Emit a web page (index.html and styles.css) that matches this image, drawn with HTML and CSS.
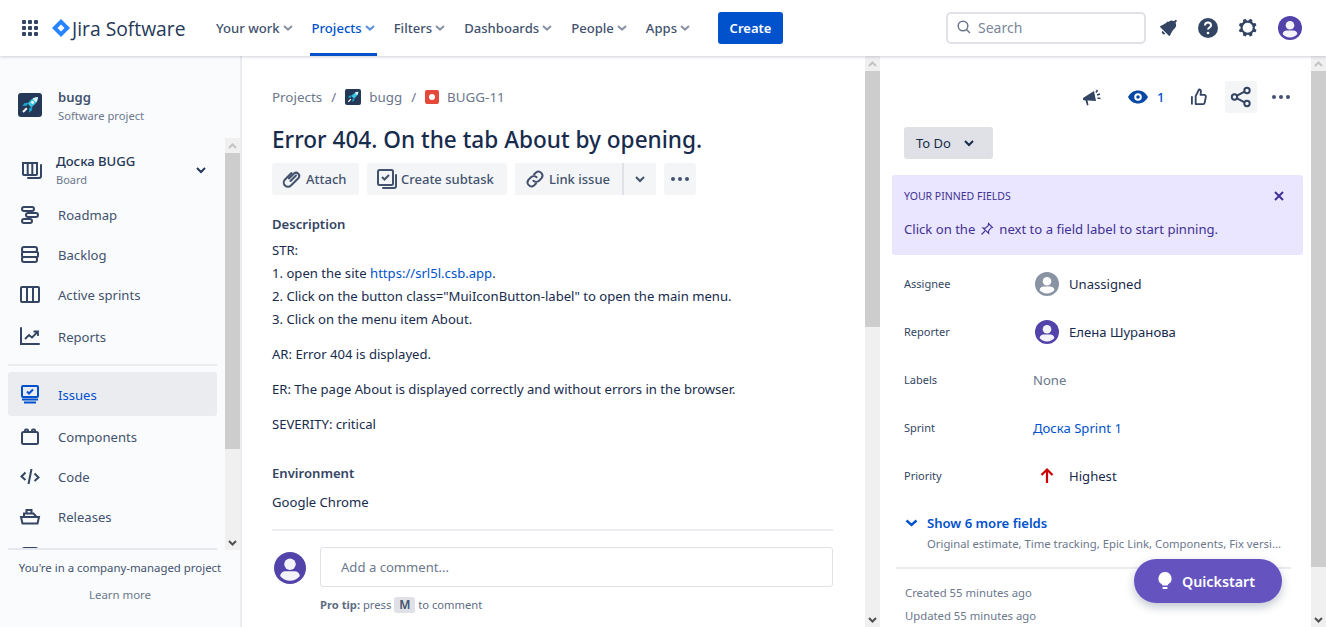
FILE: index.html
```html
<!DOCTYPE html>
<html>
<head>
  <title>BUGG-11 - Jira</title>
  <link rel="stylesheet" href="styles.css">
</head>
<body>
  <header class="topbar">
    <svg class="apps" width="16" height="16" viewBox="0 0 16 16" fill="#344563"><rect width="4" height="4" rx="1"/><rect x="6" width="4" height="4" rx="1"/><rect x="12" width="4" height="4" rx="1"/><rect y="6" width="4" height="4" rx="1"/><rect x="6" y="6" width="4" height="4" rx="1"/><rect x="12" y="6" width="4" height="4" rx="1"/><rect y="12" width="4" height="4" rx="1"/><rect x="6" y="12" width="4" height="4" rx="1"/><rect x="12" y="12" width="4" height="4" rx="1"/></svg>
    <svg class="logo" width="18" height="18" viewBox="0 0 18 18"><path d="M9 0l9 9-9 9-9-9z" fill="#2684ff"/><path d="M9 5.500L12.500 9 9 12.500 5.500 9z" fill="#fff"/></svg>
    <span class="brand">Jira Software</span>
    <nav class="mainnav">
      <a class="navlink">Your work <svg width="10" height="6" viewBox="0 0 10 6"><path d="M1 1l4 3.600L9 1" fill="none" stroke="#8993a4" stroke-width="2"/></svg></a>
      <a class="navlink active">Projects <svg width="10" height="6" viewBox="0 0 10 6"><path d="M1 1l4 3.600L9 1" fill="none" stroke="#5c8fdc" stroke-width="2"/></svg></a>
      <a class="navlink">Filters <svg width="10" height="6" viewBox="0 0 10 6"><path d="M1 1l4 3.600L9 1" fill="none" stroke="#8993a4" stroke-width="2"/></svg></a>
      <a class="navlink">Dashboards <svg width="10" height="6" viewBox="0 0 10 6"><path d="M1 1l4 3.600L9 1" fill="none" stroke="#8993a4" stroke-width="2"/></svg></a>
      <a class="navlink">People <svg width="10" height="6" viewBox="0 0 10 6"><path d="M1 1l4 3.600L9 1" fill="none" stroke="#8993a4" stroke-width="2"/></svg></a>
      <a class="navlink">Apps <svg width="10" height="6" viewBox="0 0 10 6"><path d="M1 1l4 3.600L9 1" fill="none" stroke="#8993a4" stroke-width="2"/></svg></a>
    </nav>
    <button class="create">Create</button>
    <div class="search">
      <svg width="16" height="16" viewBox="0 0 16 16" fill="none" stroke="#6b778c" stroke-width="1.500"><circle cx="7" cy="7" r="4.800"/><path d="M10.500 10.500l3.500 3.500"/></svg>
      <span>Search</span>
    </div>
    <div class="topicons">
      <svg width="24" height="24" viewBox="0 0 24 24" fill="#344563"><path d="M6.500 17.700a2 2 0 002.800 0l-2.800-2.900a2 2 0 000 2.900zm4.900-12.200l-.7.7c-.8.8-2.200 1.800-3.200 2.300l-3 1.500c-.5.300-.6.800-.2 1.200l8.600 8.500c.4.400.9.300 1.100-.2l1.500-3c.5-1 1.600-2.400 2.300-3.200l.8-.7a5 5 0 00.9-5.800l1-1a1 1 0 000-1.500l-.1-.1a1 1 0 00-1.400 0l-1 1a5 5 0 00-5.800.9z"/></svg>
      <svg width="24" height="24" viewBox="0 0 24 24"><circle cx="12" cy="12" r="10" fill="#344563"/><path d="M9 9.600a3 3 0 116 0c0 1.900-3 2-3 4" fill="none" stroke="#fff" stroke-width="2"/><circle cx="12" cy="17" r="1.300" fill="#fff"/></svg>
      <svg width="24" height="24" viewBox="0 0 24 24" fill="#344563"><path fill-rule="evenodd" d="M11.701 16.700a5.002 5.002 0 110-10.003 5.002 5.002 0 010 10.004m8.368-3.117a1.995 1.995 0 01-1.346-1.885c0-.876.563-1.613 1.345-1.885a.48.48 0 00.315-.574 8.947 8.947 0 00-.836-1.993.477.477 0 00-.598-.195 2.04 2.04 0 01-1.29.08 1.988 1.988 0 01-1.404-1.395 2.04 2.04 0 01.076-1.297.478.478 0 00-.196-.597 8.98 8.98 0 00-1.975-.826.479.479 0 00-.574.314 1.995 1.995 0 01-1.885 1.346 1.994 1.994 0 01-1.884-1.345.482.482 0 00-.575-.315c-.708.2-1.379.485-2.004.842a.47.47 0 00-.198.582A2.002 2.002 0 014.445 7.060a.478.478 0 00-.595.196 8.946 8.946 0 00-.833 1.994.48.48 0 00.308.572 1.995 1.995 0 011.323 1.877c0 .867-.552 1.599-1.324 1.877a.479.479 0 00-.308.57 8.99 8.99 0 00.723 1.79.477.477 0 00.624.194c.595-.273 1.343-.264 2.104.238.117.077.225.185.302.3.527.8.512 1.58.198 2.188a.473.473 0 00.168.628 8.946 8.946 0 002.11.897.474.474 0 00.57-.313 1.995 1.995 0 011.886-1.353c.878 0 1.618.567 1.887 1.353a.475.475 0 00.57.313 8.964 8.964 0 002.084-.883.473.473 0 00.167-.631c-.318-.608-.337-1.393.191-2.195.077-.116.185-.225.302-.302.772-.511 1.527-.513 2.125-.23a.477.477 0 00.628-.19 8.925 8.925 0 00.728-1.793.478.478 0 00-.314-.573"/></svg>
      <svg class="me" width="24" height="24" viewBox="0 0 24 24"><circle cx="12" cy="12" r="12" fill="#5243aa"/><circle cx="12" cy="9.200" r="4.300" fill="#f4f3fb"/><path d="M4.600 18c.3-2.400 2-3.600 4-3.600h6.800c2 0 3.700 1.200 4 3.600-1.800 2.200-4.400 3.600-7.400 3.600S6.400 20.200 4.600 18z" fill="#f4f3fb"/></svg>
    </div>
  </header>

  <div class="layout">
    <aside class="sidebar">
      <div class="project">
        <svg class="rocket" width="24" height="24" viewBox="0 0 24 24"><rect width="24" height="24" rx="3" fill="#253858"/><path d="M20 4c-4.500.3-8 3-10.200 6.800l3.400 3.400C17 12 19.700 8.500 20 4z" fill="#3cc4e0"/><path d="M20 4c-2 .1-3.800.7-5.400 1.700l3.700 3.700C19.300 7.800 19.900 6 20 4z" fill="#d6f5fb"/><path d="M10.500 9.500l-4.300.8-1.700 2.700 4.200-.2zM14.500 13.500l-.8 4.300-2.700 1.700.2-4.200z" fill="#1da6c9"/><path d="M8.800 15.200l-3.800 3.800" stroke="#fff" stroke-width="2"/><circle cx="14.600" cy="9.400" r="1.400" fill="#fff"/></svg>
        <div>
          <div class="project-name">bugg</div>
          <div class="project-type">Software project</div>
        </div>
      </div>
      <div class="side-scroll">
        <div class="side-nav">
          <div class="board-row">
            <svg width="24" height="24" viewBox="0 0 24 24" fill="none" stroke="#344563" stroke-width="2"><path d="M3 5h14v11a1 1 0 01-1 1H4a1 1 0 01-1-1zM7.700 5v12M12.300 5v12"/><path d="M21 7v11a2 2 0 01-2 2H8" stroke-linecap="round"/></svg>
            <div class="board-text">
              <div class="board-name">Доска BUGG</div>
              <div class="board-sub">Board</div>
            </div>
            <svg class="board-chev" width="10" height="7" viewBox="0 0 10 7"><path d="M1 1l4 4 4-4" fill="none" stroke="#253858" stroke-width="2"/></svg>
          </div>
          <div class="side-item">
            <svg width="24" height="24" viewBox="0 0 24 24" fill="none" stroke="#344563" stroke-width="2"><rect x="4" y="4" width="12" height="4" rx="2"/><rect x="8" y="10" width="12" height="4" rx="2"/><rect x="4" y="16" width="10" height="4" rx="2"/></svg>
            <span>Roadmap</span>
          </div>
          <div class="side-item">
            <svg width="24" height="24" viewBox="0 0 24 24" fill="none" stroke="#344563" stroke-width="2"><rect x="4" y="4" width="15" height="5" rx="2"/><rect x="4" y="9" width="16" height="5" rx="1"/><rect x="4" y="14" width="15" height="5" rx="2"/></svg>
            <span>Backlog</span>
          </div>
          <div class="side-item">
            <svg width="24" height="24" viewBox="0 0 24 24" fill="none" stroke="#344563" stroke-width="2"><rect x="3" y="4" width="18" height="15" rx="1"/><path d="M9 4v15M15 4v15"/></svg>
            <span>Active sprints</span>
          </div>
          <div class="side-item reports">
            <svg width="24" height="24" viewBox="0 0 24 24" fill="none" stroke="#344563" stroke-width="2"><path d="M3 3v16h18" stroke-linecap="round"/><path d="M7 14l4-4 3 2.500 5-5M15.500 6.500H20V11" stroke-width="1.800"/></svg>
            <span>Reports</span>
          </div>
          <div class="side-divider"></div>
          <div class="side-item current">
            <svg width="24" height="24" viewBox="0 0 24 24" fill="none" stroke="#0052cc" stroke-width="2"><rect x="4" y="3" width="16" height="11" rx="1"/><path d="M9 8.500l2 2 4-4M4 16.500h16M6 19.500h12"/></svg>
            <span>Issues</span>
          </div>
          <div class="side-item">
            <svg width="24" height="24" viewBox="0 0 24 24" fill="none" stroke="#344563" stroke-width="2"><rect x="4" y="7" width="16" height="12" rx="1.500"/><path d="M7 7V5.500a1 1 0 011-1h1a1 1 0 011 1V7M14 7V5.500a1 1 0 011-1h1a1 1 0 011 1V7"/></svg>
            <span>Components</span>
          </div>
          <div class="side-item">
            <svg width="24" height="24" viewBox="0 0 24 24" fill="none" stroke="#344563" stroke-width="2"><path d="M7.500 7.500L3.500 11.500l4 3.500M16.500 8.500l4 4-4 3.500M13.500 4l-3 15"/></svg>
            <span>Code</span>
          </div>
          <div class="side-item">
            <svg width="24" height="24" viewBox="0 0 24 24" fill="none" stroke="#344563" stroke-width="2"><path d="M3 12h18l-1.500 6.500h-15zM6 12V8.500h9.500L18.500 12M8.500 8.500V5h5v3.500"/></svg>
            <span>Releases</span>
          </div>
          <div class="side-item cut">
            <svg width="24" height="24" viewBox="0 0 24 24" fill="none" stroke="#344563" stroke-width="2"><rect x="5" y="3" width="14" height="16" rx="1"/></svg>
          </div>
        </div>
        <div class="scrollbar side-bar">
          <div class="sb-arrow"><svg width="9" height="6" viewBox="0 0 9 6"><path d="M1 5l3.500-3.500L8 5" fill="none" stroke="#c4c4c4" stroke-width="2"/></svg></div>
          <div class="sb-thumb"></div>
          <div class="sb-track"></div>
          <div class="sb-arrow"><svg width="9" height="6" viewBox="0 0 9 6"><path d="M1 1l3.500 3.500L8 1" fill="none" stroke="#505050" stroke-width="2"/></svg></div>
        </div>
      </div>
      <div class="side-rule"></div>
      <div class="side-footer">
        <div class="footer-note">You're in a company-managed project</div>
        <div class="footer-link">Learn more</div>
      </div>
    </aside>

    <main class="issue">
      <div class="crumbs">
        <span>Projects</span><span class="slash">/</span>
        <svg width="16" height="16" viewBox="0 0 24 24"><rect width="24" height="24" rx="3" fill="#253858"/><path d="M20 4c-4.500.3-8 3-10.200 6.800l3.400 3.400C17 12 19.700 8.500 20 4z" fill="#3cc4e0"/><path d="M20 4c-2 .1-3.800.7-5.400 1.700l3.700 3.700C19.300 7.800 19.900 6 20 4z" fill="#d6f5fb"/><path d="M10.500 9.500l-4.300.8-1.700 2.700 4.200-.2zM14.500 13.500l-.8 4.300-2.700 1.700.2-4.200z" fill="#1da6c9"/><path d="M8.800 15.200l-3.800 3.800" stroke="#fff" stroke-width="2"/></svg>
        <span>bugg</span><span class="slash">/</span>
        <svg width="14" height="14" viewBox="0 0 14 14"><rect width="14" height="14" rx="2" fill="#e5493a"/><circle cx="7" cy="7" r="3" fill="#fff"/></svg>
        <span>BUGG-11</span>
      </div>
      <h1 class="title">Error 404. On the tab About by opening.</h1>
      <div class="actions">
        <button class="btn attach"><svg width="24" height="24" viewBox="0 0 24 24" fill="none" stroke="#42526e" stroke-width="2" stroke-linecap="round"><path d="M9 11.500l5-5a3.200 3.200 0 014.500 4.500l-7.500 7.500a4.200 4.200 0 01-6-6l6.500-6.500M10.500 14l5.500-5.500"/></svg>Attach</button>
        <button class="btn subtask"><svg width="24" height="24" viewBox="0 0 24 24" fill="none" stroke="#42526e" stroke-width="2"><rect x="3" y="3" width="15" height="15" rx="1.500"/><path d="M7 10l2.500 2.500L14 8" /><path d="M21 8v11a2 2 0 01-2 2H8" stroke-linecap="round"/></svg>Create subtask</button>
        <div class="split">
          <button class="btn link"><svg width="24" height="24" viewBox="0 0 24 24" fill="none" stroke="#42526e" stroke-width="2" stroke-linecap="round"><path d="M11 7.500l2-2a4 4 0 015.600 5.600l-2.600 2.600a4 4 0 01-5.600 0"/><path d="M13 16.500l-2 2a4 4 0 01-5.600-5.600L8 10.300a4 4 0 015.600 0"/></svg>Link issue</button>
          <button class="btn linkmore"><svg width="10" height="7" viewBox="0 0 10 7"><path d="M1 1l4 4 4-4" fill="none" stroke="#42526e" stroke-width="2"/></svg></button>
        </div>
        <button class="btn more"><svg width="18" height="4" viewBox="0 0 18 4" fill="#42526e"><circle cx="2" cy="2" r="2"/><circle cx="9" cy="2" r="2"/><circle cx="16" cy="2" r="2"/></svg></button>
      </div>
      <h2 class="section first">Description</h2>
      <div class="desc">
        <p>STR:<br>1. open the site <a class="lnk">https://srl5l.csb.app</a>.<br>2. Click on the button class="MuiIconButton-label" to open the main menu.<br>3. Click on the menu item About.</p>
        <p>AR: Error 404 is displayed.</p>
        <p>ER: The page About is displayed correctly and without errors in the browser.</p>
        <p>SEVERITY: critical</p>
      </div>
      <h2 class="section env">Environment</h2>
      <div class="desc env-text"><p>Google Chrome</p></div>
      <div class="issue-rule"></div>
      <div class="comment">
        <svg class="comment-avatar" width="32" height="32" viewBox="0 0 24 24"><circle cx="12" cy="12" r="12" fill="#5243aa"/><circle cx="12" cy="9.200" r="4.300" fill="#f4f3fb"/><path d="M4.600 18c.3-2.400 2-3.600 4-3.600h6.800c2 0 3.700 1.200 4 3.600-1.800 2.200-4.400 3.600-7.400 3.600S6.400 20.200 4.600 18z" fill="#f4f3fb"/></svg>
        <div class="comment-body">
          <div class="comment-box">Add a comment...</div>
          <div class="tip"><b>Pro tip:</b> press <kbd>M</kbd> to comment</div>
        </div>
      </div>
    </main>
    <div class="scrollbar issue-bar">
      <div class="sb-arrow"><svg width="9" height="6" viewBox="0 0 9 6"><path d="M1 5l3.500-3.500L8 5" fill="none" stroke="#c4c4c4" stroke-width="2"/></svg></div>
      <div class="sb-thumb"></div>
      <div class="sb-track"></div>
      <div class="sb-arrow"><svg width="9" height="6" viewBox="0 0 9 6"><path d="M1 1l3.500 3.500L8 1" fill="none" stroke="#505050" stroke-width="2"/></svg></div>
    </div>

    <section class="details">
      <div class="tools">
        <button class="tool"><svg width="24" height="24" viewBox="0 0 24 24" fill="#344563"><path d="M3 13l11-7 2 10-8.500-.5 1 4.500-1.500.5-1.500-5L3 15z"/><path d="M17.500 5l-1.500 2.500M20 9l-3 1M20.500 13.500l-3-.5" stroke="#344563" stroke-width="1.600"/></svg></button>
        <div class="watch"><svg width="24" height="24" viewBox="0 0 24 24"><path d="M2 12c2.500-4.500 6-6.500 10-6.500s7.500 2 10 6.500c-2.500 4.500-6 6.500-10 6.500S4.500 16.500 2 12z" fill="#0747a6"/><circle cx="12" cy="12" r="3.800" fill="#fff"/><circle cx="12" cy="12" r="1.800" fill="#0747a6"/></svg><span>1</span></div>
        <button class="tool like"><svg width="20" height="20" viewBox="0 0 24 24" fill="none" stroke="#344563" stroke-width="2.200" stroke-linejoin="round"><path d="M8 11l4-8c1.500 0 2.500 1.200 2.300 2.800l-.5 3.700h4.500c1.300 0 2.200 1.200 1.900 2.400l-1.300 6.800c-.2 1-1.100 1.800-2.100 1.800H8z"/><path d="M3.500 11v10" /></svg></button>
        <button class="tool share"><svg width="24" height="24" viewBox="0 0 24 24" fill="none" stroke="#344563" stroke-width="2"><circle cx="18" cy="5.500" r="2.700"/><circle cx="18" cy="18.500" r="2.700"/><circle cx="5.500" cy="12" r="2.700"/><path d="M8 10.700l7.600-4M8 13.300l7.600 4"/></svg></button>
        <button class="tool"><svg width="18" height="4" viewBox="0 0 18 4" fill="#42526e"><circle cx="2" cy="2" r="2"/><circle cx="9" cy="2" r="2"/><circle cx="16" cy="2" r="2"/></svg></button>
      </div>
      <button class="status">To Do <svg width="10" height="7" viewBox="0 0 10 7"><path d="M1 1l4 4 4-4" fill="none" stroke="#172b4d" stroke-width="2"/></svg></button>
      <div class="pinned">
        <div class="pinned-head">
          <span>YOUR PINNED FIELDS</span>
          <svg width="10" height="10" viewBox="0 0 10 10"><path d="M1 1l8 8M9 1l-8 8" stroke="#403294" stroke-width="2"/></svg>
        </div>
        <div class="pinned-text">Click on the <svg width="14" height="14" viewBox="0 0 14 14" fill="none" stroke="#403294" stroke-width="1.100"><path d="M8.500 1.500l4 4-1.500.5-2.500 3 .2 2.300L3 6l2.200.2 3-2.500zM5 9l-3.500 3.500"/></svg> next to a field label to start pinning.</div>
      </div>
      <div class="field">
        <span class="field-label">Assignee</span>
        <div class="field-value with-icon"><svg width="24" height="24" viewBox="0 0 24 24"><circle cx="12" cy="12" r="12" fill="#8993a4"/><circle cx="12" cy="9.200" r="4.300" fill="#fff"/><path d="M4.600 18c.3-2.400 2-3.600 4-3.600h6.800c2 0 3.700 1.200 4 3.600-1.800 2.200-4.400 3.600-7.400 3.600S6.400 20.200 4.600 18z" fill="#fff"/></svg>Unassigned</div>
      </div>
      <div class="field">
        <span class="field-label">Reporter</span>
        <div class="field-value with-icon"><svg width="24" height="24" viewBox="0 0 24 24"><circle cx="12" cy="12" r="12" fill="#5243aa"/><circle cx="12" cy="9.200" r="4.300" fill="#f4f3fb"/><path d="M4.600 18c.3-2.400 2-3.600 4-3.600h6.800c2 0 3.700 1.200 4 3.600-1.800 2.200-4.400 3.600-7.400 3.600S6.400 20.200 4.600 18z" fill="#f4f3fb"/></svg>Елена Шуранова</div>
      </div>
      <div class="field">
        <span class="field-label">Labels</span>
        <div class="field-value muted">None</div>
      </div>
      <div class="field">
        <span class="field-label">Sprint</span>
        <div class="field-value lnk">Доска Sprint 1</div>
      </div>
      <div class="field">
        <span class="field-label">Priority</span>
        <div class="field-value with-icon"><svg width="24" height="24" viewBox="0 0 24 24"><path d="M12 19V6M6.500 11L12 5.500l5.500 5.500" fill="none" stroke="#cc0000" stroke-width="2.200"/></svg>Highest</div>
      </div>
      <div class="show-more">
        <svg width="13" height="8" viewBox="0 0 13 8"><path d="M1.500 1.500l5 4.500 5-4.500" fill="none" stroke="#0052cc" stroke-width="2.400"/></svg>
        <div class="show-text">
          <div class="show-title">Show 6 more fields</div>
          <div class="show-sub">Original estimate, Time tracking, Epic Link, Components, Fix versi...</div>
        </div>
      </div>
      <div class="details-rule"></div>
      <div class="stamp">Created 55 minutes ago</div>
      <div class="stamp">Updated 55 minutes ago</div>
    </section>
    <div class="scrollbar details-bar">
      <div class="sb-arrow"><svg width="9" height="6" viewBox="0 0 9 6"><path d="M1 5l3.500-3.500L8 5" fill="none" stroke="#c4c4c4" stroke-width="2"/></svg></div>
      <div class="sb-thumb"></div>
      <div class="sb-track"></div>
      <div class="sb-arrow"><svg width="9" height="6" viewBox="0 0 9 6"><path d="M1 1l3.500 3.500L8 1" fill="none" stroke="#505050" stroke-width="2"/></svg></div>
    </div>
  </div>

  <button class="quickstart"><svg width="16" height="20" viewBox="0 0 16 20" fill="#fff"><path d="M8 1a6.500 6.500 0 00-3.500 12c.6.400.9 1 .9 1.600h5.200c0-.6.300-1.200.9-1.600A6.500 6.500 0 008 1z"/><rect x="5.400" y="16" width="5.200" height="2" rx="1"/></svg>Quickstart</button>
</body>
</html>
```

FILE: styles.css
```css
* {
  box-sizing: border-box;
}
html, body {
  height: 100%;
}
body {
  margin: 0;
  overflow: hidden;
  font-family: "Noto Sans", sans-serif;
  font-size: 13.1px;
  color: #172b4d;
  background: #fff;
}
button {
  font-family: inherit;
  border: 0;
  cursor: pointer;
}

/* top bar */
.topbar {
  height: 56px;
  display: flex;
  align-items: center;
  padding-left: 22px;
  position: relative;
  z-index: 2;
  background: #fff;
  box-shadow: 0 1px 3px rgba(9, 30, 66, 0.2);
}
.logo {
  margin-left: 14px;
}
.brand {
  margin-left: 2px;
  width: 134px;
  font-family: "Open Sans", sans-serif;
  font-size: 19.3px;
  color: #253858;
}
.mainnav {
  display: flex;
  align-self: stretch;
  width: 512px;
}
.navlink {
  display: flex;
  align-items: center;
  gap: 3px;
  padding: 3px 2px 0;
  margin: 0 7.5px;
  color: #42526e;
  font-weight: 500;
  border-bottom: 3px solid transparent;
}
.navlink:first-child {
  margin-left: 8px;
}
.navlink.active {
  color: #0052cc;
  border-bottom-color: #0052cc;
}
.create {
  width: 65px;
  height: 32px;
  background: #0052cc;
  color: #fff;
  font-size: 13px;
  font-weight: 600;
  border-radius: 3px;
}
.search {
  width: 200px;
  height: 32px;
  margin-left: 163px;
  display: flex;
  align-items: center;
  gap: 6px;
  padding: 0 0 2px 8px;
  border: 2px solid #dfe1e6;
  border-radius: 5px;
  font-size: 14px;
  color: #7a869a;
}
.topicons {
  display: flex;
  align-items: center;
  gap: 16px;
  margin-left: 10px;
}
.topicons .me {
  margin-left: 2px;
}

.layout {
  height: 571px;
  display: flex;
}

/* scrollbars */
.scrollbar {
  width: 15px;
  flex: none;
  display: flex;
  flex-direction: column;
  background: #f0f0f0;
}
.sb-arrow {
  height: 15px;
  flex: none;
  display: flex;
  align-items: center;
  justify-content: center;
}
.sb-thumb {
  background: #cdcdcd;
}
.sb-track {
  flex: 1;
}
.side-bar .sb-thumb {
  height: 296px;
}
.issue-bar .sb-thumb {
  height: 256px;
}
.details-bar .sb-thumb {
  height: 496px;
}

/* sidebar */
.sidebar {
  width: 242px;
  flex: none;
  display: flex;
  flex-direction: column;
  background: #fafbfc;
  border-right: 2px solid #ebecf0;
}
.project {
  height: 82px;
  flex: none;
  display: flex;
  align-items: center;
  gap: 16px;
  padding: 16px 0 0 18px;
}
.project-name {
  font-weight: 600;
  color: #42526e;
}
.project-type {
  margin-top: 2px;
  font-size: 11.2px;
  color: #6b778c;
}
.side-scroll {
  height: 412px;
  flex: none;
  display: flex;
  overflow: hidden;
}
.side-nav {
  width: 225px;
  padding: 10px 8px 0;
  overflow: hidden;
}
.board-row {
  height: 44px;
  display: flex;
  align-items: center;
  gap: 12px;
  padding-left: 12px;
  margin-bottom: 3px;
}
.board-name {
  margin: -1px 0 2px;
  font-weight: 500;
  color: #253858;
}
.board-sub {
  font-size: 11px;
  color: #6b778c;
}
.board-chev {
  margin-left: 49px;
}
.side-item {
  height: 40px;
  display: flex;
  align-items: center;
  gap: 16px;
  padding-left: 10px;
  color: #42526e;
}
.side-item.reports {
  margin-top: 2px;
}
.side-item.current {
  height: 44px;
  padding-top: 2px;
  background: #ebecf0;
  border-radius: 3px;
  color: #0052cc;
  margin-bottom: 1px;
}
.side-divider {
  height: 2px;
  margin: 7px 0 6px;
  background: #ebecf0;
}
.side-rule {
  height: 2px;
  flex: none;
  margin: -2px 23px 0 8px;
  position: relative;
  background: #e6e8ed;
}
.side-footer {
  flex: 1;
  padding-top: 10px;
  text-align: center;
  font-size: 11.4px;
  color: #42526e;
}
.footer-note {
  line-height: 16px;
}
.footer-link {
  margin-top: 11px;
  line-height: 16px;
  color: #6b778c;
}

/* issue column */
.issue {
  width: 623px;
  flex: none;
  padding: 31px 32px 0 30px;
  overflow: hidden;
}
.crumbs {
  height: 20px;
  display: flex;
  align-items: center;
  font-size: 13.4px;
  color: #6b778c;
}
.slash {
  margin: 0 9px;
}
.crumbs svg {
  margin-right: 8px;
}
.title {
  margin: 17px 0 7px;
  font-size: 22.6px;
  line-height: 32px;
  font-weight: 500;
  color: #172b4d;
}
.actions {
  display: flex;
  gap: 8px;
}
.btn {
  height: 32px;
  display: flex;
  align-items: center;
  justify-content: center;
  gap: 2px;
  padding: 0;
  font-size: 13px;
  font-weight: 500;
  color: #42526e;
  background: #f4f5f7;
  border-radius: 3px;
}
.attach {
  width: 87px;
  justify-content: flex-start;
  padding-left: 8px;
}
.subtask {
  width: 140px;
  justify-content: flex-start;
  padding-left: 8px;
}
.split {
  display: flex;
  gap: 2px;
  background: #dfe1e6;
  border-radius: 3px;
}
.link {
  width: 107px;
  justify-content: flex-start;
  padding-left: 8px;
  border-radius: 3px 0 0 3px;
}
.linkmore {
  width: 32px;
  border-radius: 0 3px 3px 0;
}
.more {
  width: 32px;
}
.section {
  margin: 0;
  font-size: 13.1px;
  line-height: 20px;
  font-weight: 600;
  color: #344563;
}
.section.first {
  margin-top: 19px;
}
.section.env {
  margin-top: 27px;
}
.desc {
  margin-top: 5px;
  line-height: 23px;
  color: #172b4d;
}
.desc p {
  margin: 0 0 12px;
}
.env-text {
  margin-top: 8px;
}
.lnk {
  color: #0052cc;
}
.issue-rule {
  height: 2px;
  margin-top: 15px;
  background: #ebecf0;
}
.comment {
  display: flex;
  gap: 14px;
  margin-top: 16px;
  padding-left: 2px;
}
.comment-avatar {
  margin-top: 5px;
  flex: none;
}
.comment-body {
  flex: 1;
}
.comment-box {
  height: 40px;
  display: flex;
  align-items: center;
  padding-left: 20px;
  border: 1px solid #dfe1e6;
  border-radius: 3px;
  color: #6b778c;
}
.tip {
  margin-top: 10px;
  font-size: 11.2px;
  color: #5e6c84;
}
kbd {
  display: inline-block;
  padding: 0 5px;
  line-height: 16px;
  font-family: inherit;
  font-size: 12px;
  font-weight: 600;
  background: #dfe1e6;
  border-radius: 3px;
  color: #42526e;
}

/* details column */
.details {
  width: 431px;
  flex: none;
  padding-top: 25px;
  overflow: hidden;
}
.tools {
  height: 32px;
  display: flex;
  justify-content: flex-end;
  align-items: center;
  padding-right: 14px;
  gap: 8px;
}
.tool {
  width: 32px;
  height: 32px;
  display: flex;
  align-items: center;
  justify-content: center;
  background: none;
  border-radius: 3px;
  padding: 0;
}
.share {
  background: #f4f5f7;
}
.like {
  margin-right: 2px;
}
.watch {
  width: 50px;
  margin: 0 3px 0 6px;
  padding-left: 4px;
  display: flex;
  align-items: center;
  gap: 7px;
  font-weight: 500;
  color: #0052cc;
}
.status {
  display: flex;
  align-items: center;
  gap: 13px;
  width: 89px;
  height: 32px;
  margin: 14px 0 0 24px;
  padding-left: 12px;
  font-size: 13px;
  color: #172b4d;
  background: #dfe1e6;
  border-radius: 3px;
}
.pinned {
  height: 80px;
  margin: 16px 8px 0 12px;
  padding: 12px 19px 0 12px;
  background: #eae6ff;
  border-radius: 3px;
  color: #403294;
}
.pinned-head {
  display: flex;
  justify-content: space-between;
  align-items: center;
  font-size: 10.5px;
  line-height: 18px;
}
.pinned-text {
  display: flex;
  align-items: center;
  gap: 5px;
  margin-top: 14px;
  line-height: 20px;
}
.field {
  height: 48px;
  display: flex;
  align-items: center;
  padding-left: 24px;
}
.pinned + .field {
  margin-top: 5px;
}
.field-label {
  width: 129px;
  padding-bottom: 2px;
  font-size: 11px;
  color: #344563;
}
.field-value {
  display: flex;
  align-items: center;
  gap: 10px;
}
.with-icon svg {
  margin-left: 2px;
}
.muted {
  color: #6b778c;
}
.show-more {
  display: flex;
  gap: 9px;
  margin-top: 13px;
  padding-left: 25px;
}
.show-more svg {
  margin-top: 6px;
  flex: none;
}
.show-title {
  font-weight: 600;
  color: #0052cc;
  line-height: 20px;
}
.show-sub {
  font-size: 11.3px;
  line-height: 16px;
  margin-top: 3px;
  color: #6b778c;
  white-space: nowrap;
}
.details-rule {
  height: 2px;
  margin: 15px 20px 0 16px;
  background: #ebecf0;
}
.stamp {
  margin-left: 25px;
  font-size: 11.3px;
  line-height: 16px;
  color: #6b778c;
  margin-top: 7px;
}
.details-rule + .stamp {
  margin-top: 16px;
}

.quickstart {
  position: absolute;
  left: 1134px;
  top: 559px;
  width: 148px;
  height: 44px;
  display: flex;
  align-items: center;
  justify-content: center;
  gap: 9px;
  padding: 0 4px 0 0;
  background: #6554c0;
  color: #fff;
  font-size: 14.3px;
  font-weight: 600;
  border-radius: 22px;
  box-shadow: 0 4px 10px rgba(9, 30, 66, 0.25);
}
```
